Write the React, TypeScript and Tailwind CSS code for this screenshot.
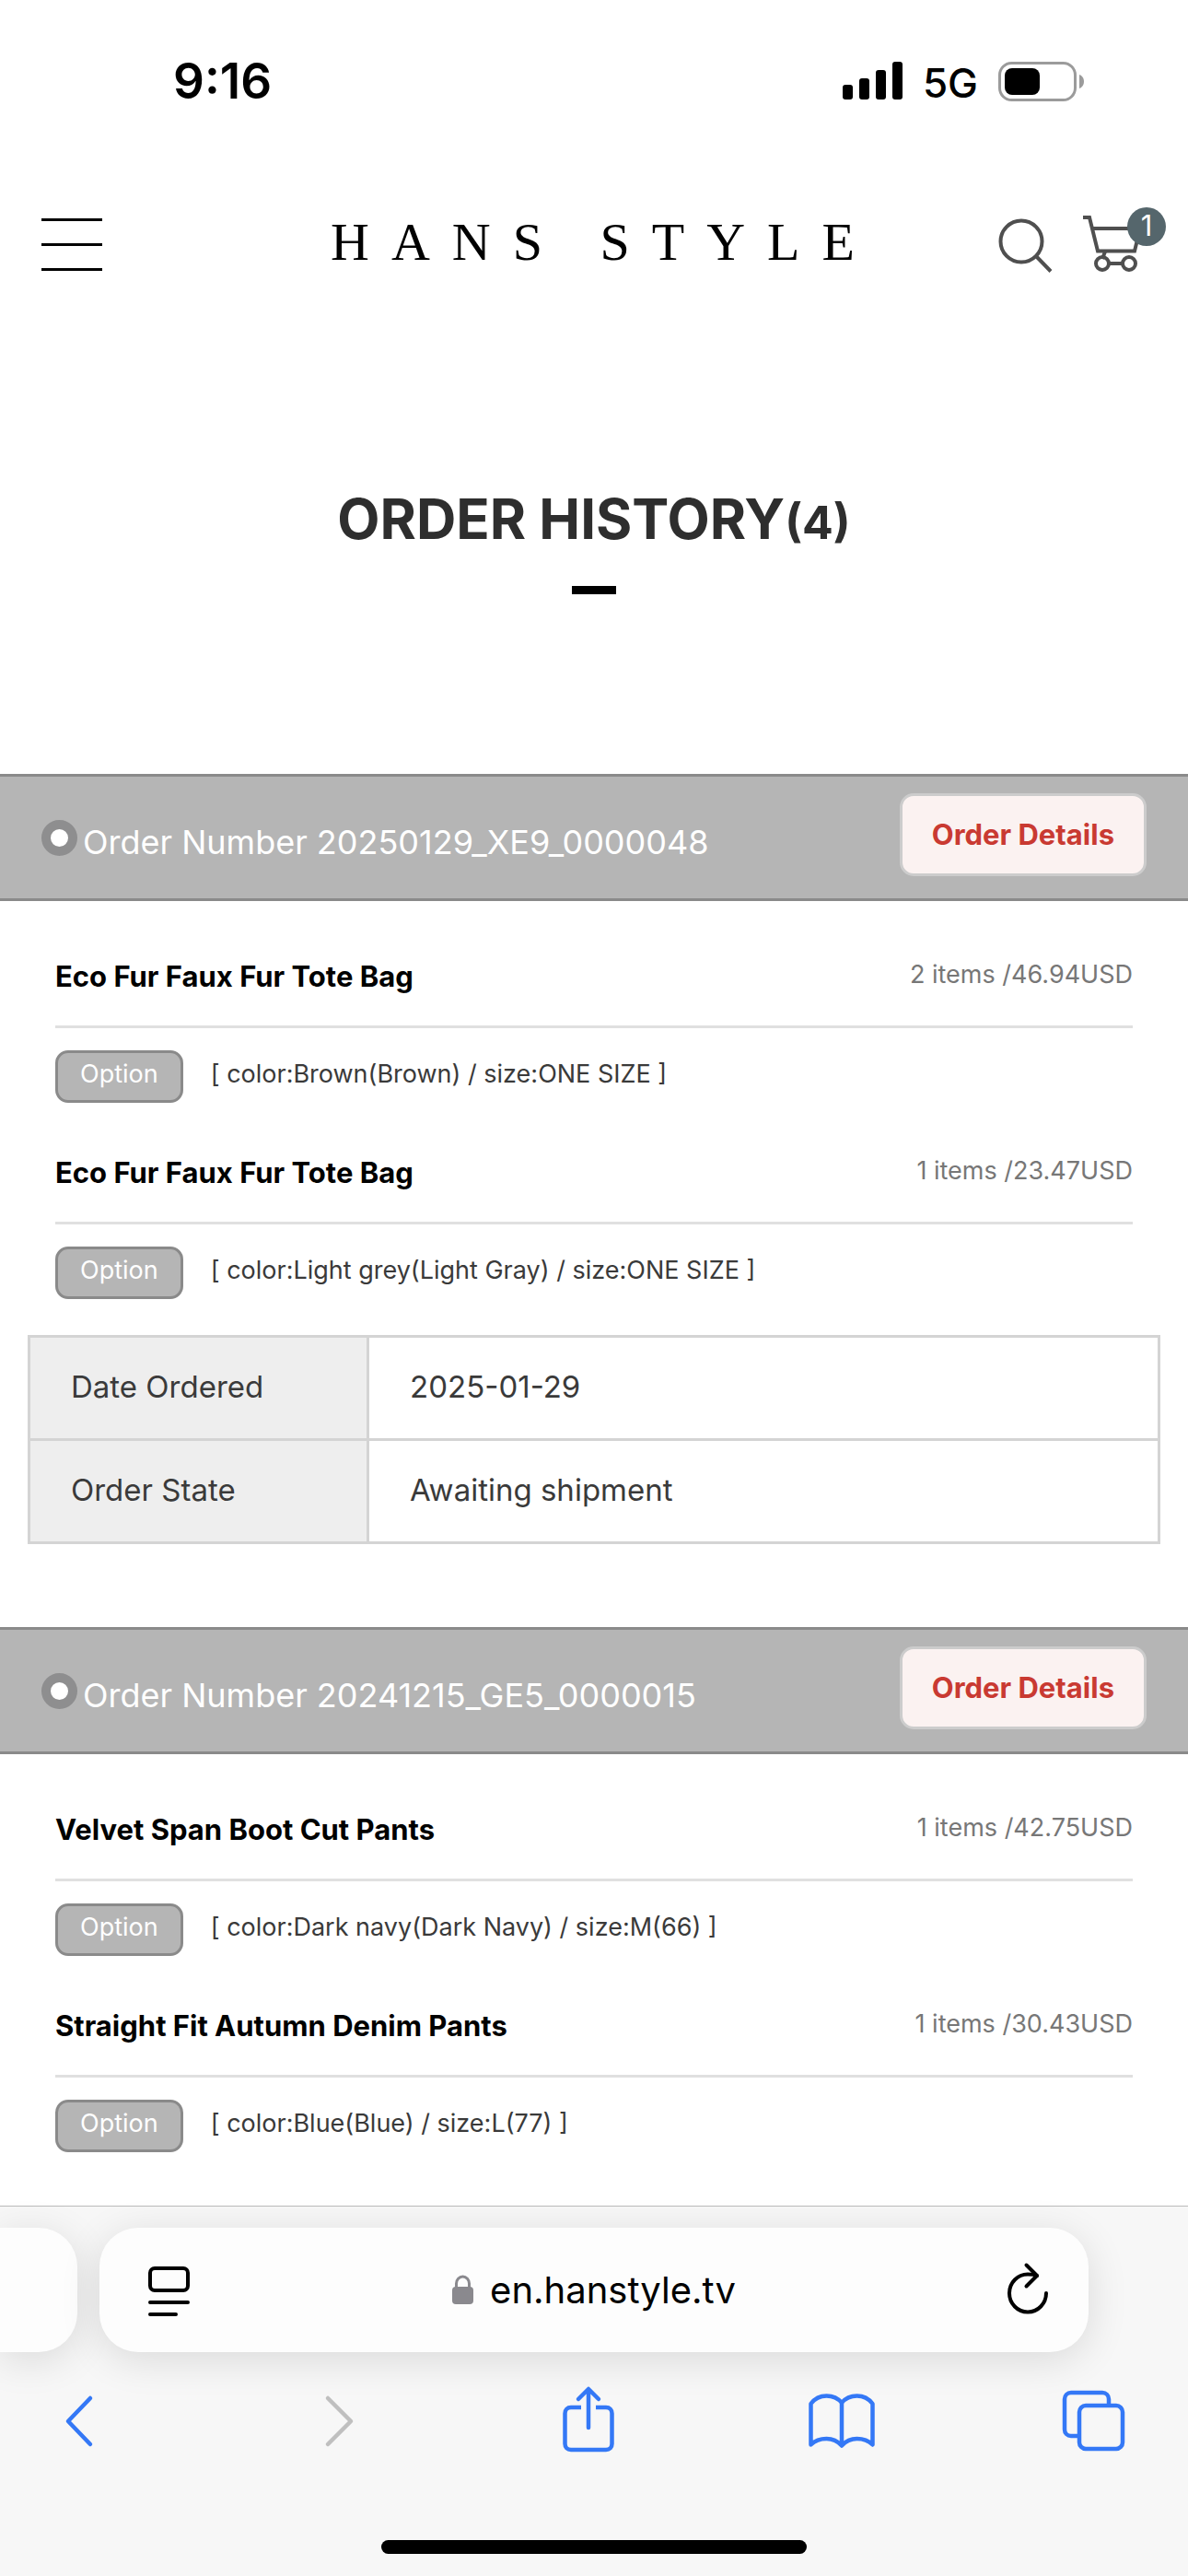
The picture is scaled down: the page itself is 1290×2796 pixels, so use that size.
import React from 'react';

type Item = {
  name: string;
  price: string;
  option: string;
};

type Order = {
  id: string;
  items: Item[];
  date?: string;
  state?: string;
};

const orders: Order[] = [
  {
    id: '20250129_XE9_0000048',
    items: [
      { name: 'Eco Fur Faux Fur Tote Bag', price: '2 items /46.94USD', option: '[ color:Brown(Brown) / size:ONE SIZE ]' },
      { name: 'Eco Fur Faux Fur Tote Bag', price: '1 items /23.47USD', option: '[ color:Light grey(Light Gray) / size:ONE SIZE ]' },
    ],
    date: '2025-01-29',
    state: 'Awaiting shipment',
  },
  {
    id: '20241215_GE5_0000015',
    items: [
      { name: 'Velvet Span Boot Cut Pants', price: '1 items /42.75USD', option: '[ color:Dark navy(Dark Navy) / size:M(66) ]' },
      { name: 'Straight Fit Autumn Denim Pants', price: '1 items /30.43USD', option: '[ color:Blue(Blue) / size:L(77) ]' },
    ],
  },
];

const StatusBar = () => (
  <div className="flex h-[176px] items-center justify-between pl-[188px] pr-[113px]">
    <span className="text-[53px] font-semibold leading-[60px]">9:16</span>
    <div className="flex items-center gap-[22px]">
      <svg width="65" height="42" viewBox="0 0 65 42" aria-hidden="true">
        <rect x="0" y="25" width="11" height="16" rx="3" />
        <rect x="18" y="18" width="11" height="23" rx="3" />
        <rect x="36" y="9" width="11" height="32" rx="3" />
        <rect x="54" y="0" width="11" height="41" rx="3" />
      </svg>
      <span className="pt-1 text-[44px] font-medium leading-[60px]">5G</span>
      <svg width="93" height="43" viewBox="0 0 93 43" aria-hidden="true">
        <rect x="1.5" y="1.5" width="82" height="40" rx="13" fill="none" stroke="#9b9b9b" strokeWidth="3" />
        <rect x="7" y="7" width="38" height="29" rx="8" />
        <path d="M88 14c3 1 5 4 5 7.500s-2 6.500-5 7.500z" fill="#9b9b9b" />
      </svg>
    </div>
  </div>
);

const Header = () => (
  <header className="grid h-[178px] grid-cols-[1fr_auto_1fr] items-center pl-[45px] pr-6">
    <button aria-label="Menu" className="flex w-[66px] flex-col gap-6">
      <span className="h-[3px] bg-black" />
      <span className="h-[3px] bg-black" />
      <span className="h-[3px] bg-black" />
    </button>
    <a href="#" className="pb-1 font-['Liberation_Serif',serif] text-[58px] leading-[64px] tracking-[24px] text-black">
      HANS STYLE
    </a>
    <div className="flex items-center justify-end gap-7">
      <button aria-label="Search">
        <svg width="64" height="80" viewBox="0 0 64 80" fill="none" stroke="#4f4f4f" strokeWidth="4">
          <circle cx="29" cy="37" r="22.500" />
          <path d="M45 53l16 16.500" />
        </svg>
      </button>
      <button aria-label="Cart" className="relative">
        <svg width="94" height="80" viewBox="0 0 94 80" fill="none" stroke="#4f4f4f" strokeWidth="4">
          <path d="M4 11h7l9 36.500h40l6-24.500H14" />
          <path d="M28 48l-3 8" />
          <circle cx="25" cy="61" r="7" />
          <circle cx="54" cy="61" r="7" />
          <path d="M33 61h13" />
        </svg>
        <span className="absolute right-0 top-0 size-[42px] rounded-full bg-[#55666c] text-center text-[31px] leading-[40px] text-white">1</span>
      </button>
    </div>
  </header>
);

const OrderItem = ({ item }: { item: Item }) => (
  <li>
    <div className="flex items-start justify-between border-b-[3px] border-[#e0e0e0] pb-[29px] pt-[52px]">
      <h3 className="text-[31px] font-bold leading-[48px] text-black">{item.name}</h3>
      <span className="text-[27px] leading-[44px] text-[#777]">{item.price}</span>
    </div>
    <div className="mt-6 flex gap-[30px] text-[27px] leading-[46px]">
      <span className="rounded-[14px] border-[3px] border-[#8a8a8a] bg-[#b5b5b5] px-6 pb-[5px] text-white">Option</span>
      <span className="pt-[3px] text-[#3a3a3a]">{item.option}</span>
    </div>
  </li>
);

const OrderCard = ({ order }: { order: Order }) => (
  <section className="mb-[90px] last:mb-0">
    <div className="flex items-start justify-between border-y-[3px] border-[#8a8a8a] bg-[#b5b5b5] px-[45px] pb-6 pt-[18px]">
      <h2 className="flex items-start gap-[6px] pt-[29px] text-[36px] leading-[48px] text-white">
        <span className="size-[39px] rounded-full border-[10px] border-[#8e8e8f] bg-white" />
        Order Number {order.id}
      </h2>
      <button className="h-[90px] rounded-[15px] border-[3px] border-[#ccc] bg-[#fbf2f1] px-8 text-[31px] font-bold text-[#c93a32]">
        Order Details
      </button>
    </div>
    <ul className="px-[60px] pt-[6px]">
      {order.items.map((item, i) => (
        <OrderItem key={i} item={item} />
      ))}
    </ul>
    {order.date && (
      <div className="px-[30px] pt-[39px]">
        <table className="w-full border-collapse text-left text-[33px] leading-[46px] text-[#3a3a3a]">
          <tbody>
            <tr className="h-[112px]">
              <th className="w-[30%] border-[3px] border-[#d4d4d4] bg-[#eee] px-11 pb-[3px] font-normal">Date Ordered</th>
              <td className="border-[3px] border-[#d4d4d4] px-11 pb-[3px]">{order.date}</td>
            </tr>
            <tr className="h-[112px]">
              <th className="border-[3px] border-[#d4d4d4] bg-[#eee] px-11 pb-[3px] font-normal">Order State</th>
              <td className="border-[3px] border-[#d4d4d4] px-11 pb-[3px]">{order.state}</td>
            </tr>
          </tbody>
        </table>
      </div>
    )}
  </section>
);

const toolIcon = {
  width: 80,
  height: 80,
  viewBox: '0 0 80 80',
  fill: 'none',
  stroke: 'currentColor',
  strokeWidth: 4.5,
  strokeLinecap: 'round',
  strokeLinejoin: 'round',
} as const;

const BrowserBar = () => (
  <footer className="sticky bottom-0 overflow-x-clip border-t border-[#bbb] bg-[#f7f7f7] pb-6 pt-[23px]">
    <div className="flex gap-6 pr-[108px]">
      {/* edge of the previous tab */}
      <div className="w-[84px] shrink-0 rounded-r-[42px] bg-[#fdfdfd] shadow-[0_8px_44px_rgba(0,0,0,0.12)]" />
      <div className="flex h-[135px] flex-1 items-center justify-between rounded-[42px] bg-[#fdfdfd] px-11 shadow-[0_8px_44px_rgba(0,0,0,0.12)]">
        <button aria-label="Page menu">
          <svg width="64" height="64" viewBox="0 0 64 64" fill="none" stroke="black" strokeWidth="4" strokeLinecap="round">
            <rect x="11" y="8" width="41" height="24" rx="5" />
            <path d="M11 45h41M11 58h28" />
          </svg>
        </button>
        <a href="#" className="flex items-center gap-[18px] text-[40px] leading-[54px] text-black">
          <svg width="23" height="33" viewBox="0 0 23 33" aria-hidden="true">
            <rect x="0" y="13" width="23" height="19" rx="4" fill="#8a898e" />
            <path d="M4.500 15V9.500a7 7.500 0 0 1 14 0V15" fill="none" stroke="#8a898e" strokeWidth="3" />
          </svg>
          en.hanstyle.tv
        </a>
        <button aria-label="Reload">
          <svg width="64" height="64" viewBox="-20 0 64 64" fill="none" stroke="black" strokeWidth="4" strokeLinecap="round" strokeLinejoin="round">
            <path d="M42 35a20 20.500 0 1 1-20-20.500c4 0 7 0 10 1.500" />
            <path d="M20.500 4.500l11.500 11.500-11.500 11.500" />
          </svg>
        </button>
      </div>
    </div>
    <nav className="flex justify-between pl-[46px] pr-[62px] pt-[33px] text-[#3478f6]">
      <button aria-label="Back">
        <svg {...toolIcon}><path d="M52 17L28 42l24 25" /></svg>
      </button>
      <button aria-label="Forward" disabled className="text-[#bfbfbf]">
        <svg {...toolIcon}><path d="M34 17l25 25-25 25" /></svg>
      </button>
      <button aria-label="Share">
        <svg {...toolIcon}>
          <path d="M42 49V8M31 18L42 7l11 11" />
          <path d="M34 27H23c-4 0-6.500 2.500-6.500 6.500v33c0 4 2.500 6.500 6.500 6.500h38c4 0 6.500-2.500 6.500-6.500v-33c0-4-2.500-6.500-6.500-6.500H50" strokeLinecap="butt" />
        </svg>
      </button>
      <button aria-label="Bookmarks">
        <svg {...toolIcon}>
          <path d="M41 22C36.500 16.500 30.500 14.500 24.500 14.500S12 17 7.500 23v44.500c5-5 11-6.500 17-6.500s12 2.500 16.500 7.500c4.500-5 10.500-7.500 16.500-7.500s12 1.500 17 6.500V23c-4.500-6-11-8.500-17-8.500S45.500 16.500 41 22zM41 22v46" />
        </svg>
      </button>
      <button aria-label="Tabs">
        <svg {...toolIcon}>
          <rect x="24" y="25" width="47" height="47" rx="7" />
          <path d="M24 58h-9c-4 0-7-3-7-7V18c0-4 3-7 7-7h34c4 0 7 3 7 7v7" strokeLinecap="butt" />
        </svg>
      </button>
    </nav>
    <div className="mx-auto mt-[91px] h-[15px] w-[462px] rounded-full bg-black" />
  </footer>
);

const App: React.FC = () => (
  <div className="flex min-h-screen flex-col bg-white font-['Inter',sans-serif] text-black">
    <StatusBar />
    <Header />
    <main className="flex-1">
      <div className="flex flex-col items-center pb-[195px] pt-[173px]">
        <h1 className="text-[60px] font-bold leading-[72px] text-[#2e2e2e]">
          ORDER HISTORY<span className="text-[50px]">(4)</span>
        </h1>
        <span className="mt-[33px] h-[9px] w-12 bg-black" />
      </div>
      {orders.map((order) => (
        <OrderCard key={order.id} order={order} />
      ))}
    </main>
    <BrowserBar />
  </div>
);

export default App;
